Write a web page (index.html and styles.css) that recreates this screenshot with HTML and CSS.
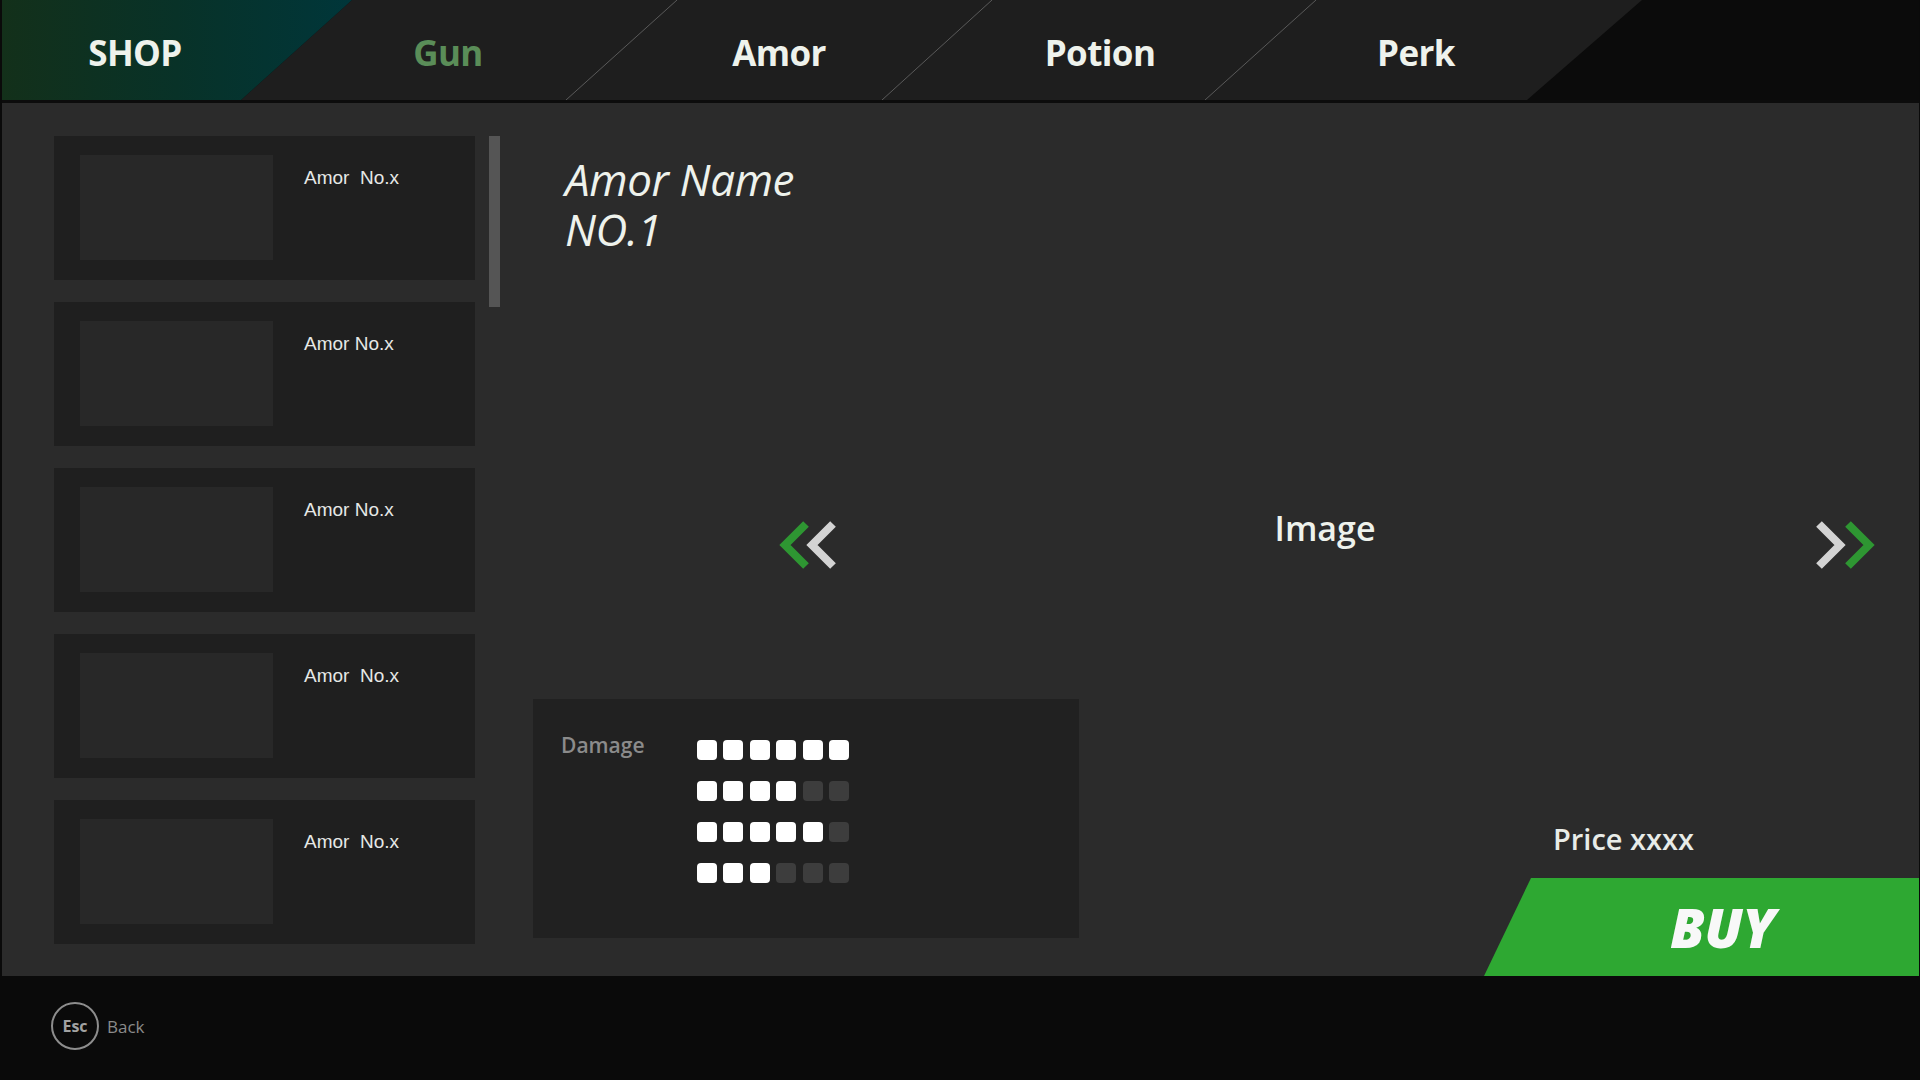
FILE: index.html
```html
<!DOCTYPE html>
<html lang="en">
<head>
<meta charset="utf-8">
<title>Shop</title>
<link rel="stylesheet" href="styles.css">
</head>
<body>
<div class="screen">
  <header class="topbar">
    <svg class="topbar-bg" width="1917" height="100" viewBox="0 0 1917 100" aria-hidden="true">
      <defs>
        <linearGradient id="shopGrad" x1="0" y1="0" x2="350" y2="0" gradientUnits="userSpaceOnUse">
          <stop offset="0" stop-color="#13301a"/>
          <stop offset="0.5" stop-color="#083228"/>
          <stop offset="1" stop-color="#00363a"/>
        </linearGradient>
      </defs>
      <polygon points="350,0 1640,0 1525,100 239,100" fill="#1e1e1e"/>
      <polygon points="0,0 350,0 239,100 0,100" fill="url(#shopGrad)"/>
      <line x1="675" y1="0" x2="564" y2="100" stroke="#5a5a5a" stroke-width="1"/>
      <line x1="990" y1="0" x2="880" y2="100" stroke="#5a5a5a" stroke-width="1"/>
      <line x1="1314" y1="0" x2="1203" y2="100" stroke="#5a5a5a" stroke-width="1"/>
    </svg>
    <nav class="tabs">
      <div class="tab tab-shop">SHOP</div>
      <div class="tab tab-active">Gun</div>
      <div class="tab">Amor</div>
      <div class="tab">Potion</div>
      <div class="tab">Perk</div>
    </nav>
  </header>

  <main class="main">
    <aside class="list-col">
      <div class="list">
        <div class="card"><div class="thumb"></div><div class="card-name">Amor  No.x</div></div>
        <div class="card"><div class="thumb"></div><div class="card-name">Amor No.x</div></div>
        <div class="card"><div class="thumb"></div><div class="card-name">Amor No.x</div></div>
        <div class="card"><div class="thumb"></div><div class="card-name">Amor  No.x</div></div>
        <div class="card"><div class="thumb"></div><div class="card-name">Amor  No.x</div></div>
      </div>
      <div class="scrollbar"><div class="scroll-thumb"></div></div>
    </aside>

    <section class="detail">
      <h1 class="title"><span class="title-line">Amor Name</span><span class="title-line">NO.1</span></h1>

      <div class="viewer">
        <svg class="chev chev-left" width="60" height="50" viewBox="0 0 60 50" aria-hidden="true">
          <polyline points="27,4 6,25 27,46" fill="none" stroke="#2e9632" stroke-width="8"/>
          <polyline points="54,4 33,25 54,46" fill="none" stroke="#d3d3d3" stroke-width="8"/>
        </svg>
        <div class="image-label">Image</div>
        <svg class="chev chev-right" width="62" height="50" viewBox="0 0 62 50" aria-hidden="true">
          <polyline points="6,4 27,25 6,46" fill="none" stroke="#d3d3d3" stroke-width="8"/>
          <polyline points="35,4 56,25 35,46" fill="none" stroke="#2e9632" stroke-width="8"/>
        </svg>
      </div>

      <div class="bottom">
        <div class="stats">
          <div class="stats-label">Damage</div>
          <div class="bars">
            <div class="bar-row"><span class="pip on"></span><span class="pip on"></span><span class="pip on"></span><span class="pip on"></span><span class="pip on"></span><span class="pip on"></span></div>
            <div class="bar-row"><span class="pip on"></span><span class="pip on"></span><span class="pip on"></span><span class="pip on"></span><span class="pip"></span><span class="pip"></span></div>
            <div class="bar-row"><span class="pip on"></span><span class="pip on"></span><span class="pip on"></span><span class="pip on"></span><span class="pip on"></span><span class="pip"></span></div>
            <div class="bar-row"><span class="pip on"></span><span class="pip on"></span><span class="pip on"></span><span class="pip"></span><span class="pip"></span><span class="pip"></span></div>
          </div>
        </div>
        <div class="purchase">
          <div class="price">Price xxxx</div>
          <div class="buy"><span class="buy-text">BUY</span></div>
        </div>
      </div>
    </section>
  </main>

  <footer class="footer">
    <div class="key">Esc</div>
    <div class="key-label">Back</div>
  </footer>
</div>
</body>
</html>
```

FILE: styles.css
```css
* { box-sizing: border-box; }

html, body {
  margin: 0;
  padding: 0;
  background: #0a0a0a;
}

body {
  font-family: "Open Sans", "Liberation Sans", sans-serif;
  color: #eef2ec;
}

.screen {
  width: 1920px;
  height: 1080px;
  border-left: 2px solid #0a0a0a;
  border-right: 1px solid #0a0a0a;
  background: #0a0a0a;
  display: flex;
  flex-direction: column;
  overflow: hidden;
}

/* ---------- top bar ---------- */
.topbar {
  position: relative;
  height: 103px;
  flex: none;
  background: #0b0b0b;
  border-bottom: 3px solid #0c0c0c;
}

.topbar-bg {
  position: absolute;
  left: 0;
  top: 0;
  display: block;
}

.tabs {
  position: relative;
  display: grid;
  grid-template-columns: 266px 360px 302px 340px 292px;
  padding-top: 33px;
}

.tab {
  text-align: center;
  font-size: 35px;
  font-weight: 700;
  line-height: 40px;
  color: #eef2ec;
  letter-spacing: -0.6px;
}

.tab-active {
  color: #5a8d58;
}

/* ---------- main ---------- */
.main {
  flex: 1;
  display: flex;
  background: #2b2b2b;
  min-height: 0;
}

.list-col {
  display: flex;
  padding-left: 52px;
  padding-top: 33px;
  flex: none;
}

.list {
  width: 421px;
  display: flex;
  flex-direction: column;
  gap: 22px;
}

.card {
  height: 144px;
  background: #1f1f1f;
  display: flex;
  align-items: flex-start;
  padding: 19px 0 0 26px;
}

.thumb {
  width: 193px;
  height: 105px;
  background: #282828;
  flex: none;
}

.card-name {
  margin-left: 31px;
  margin-top: 12px;
  font-family: "Liberation Sans", Arial, sans-serif;
  font-size: 19px;
  line-height: 22px;
  white-space: pre;
  color: #e6e8e6;
}

.scrollbar {
  margin-left: 14px;
  width: 11px;
}

.scroll-thumb {
  width: 11px;
  height: 171px;
  background: #555555;
}

/* ---------- detail ---------- */
.detail {
  flex: 1;
  display: flex;
  flex-direction: column;
  min-width: 0;
}

.title {
  margin: 51px 0 0 0;
  padding-left: 65px;
  font-size: 44px;
  font-weight: 400;
  font-style: italic;
  line-height: 50px;
  color: #eef2ec;
  letter-spacing: -0.4px;
}

.title-line {
  display: block;
  height: 50px;
}

.viewer {
  margin-top: 250px;
  height: 66px;
  display: flex;
  align-items: flex-start;
}

.chev {
  display: block;
  flex: none;
  margin-top: 16px;
}

.chev-left {
  margin-left: 279px;
}

.image-label {
  width: 200px;
  margin-left: 386px;
  margin-top: 4px;
  text-align: center;
  font-size: 34px;
  font-weight: 600;
  line-height: 40px;
  color: #eef2ec;
}

.chev-right {
  margin-left: auto;
  margin-right: 44px;
}

.bottom {
  margin-top: auto;
  display: flex;
  align-items: flex-end;
}

.stats {
  margin-left: 33px;
  margin-bottom: 38px;
  width: 546px;
  height: 239px;
  background: #212121;
  display: flex;
  padding: 33px 0 0 28px;
}

.stats-label {
  width: 136px;
  font-size: 21px;
  font-weight: 600;
  line-height: 26px;
  color: #8b8b8b;
}

.bars {
  margin-top: 8px;
  display: flex;
  flex-direction: column;
  gap: 21px;
}

.bar-row {
  display: flex;
  gap: 6.4px;
}

.pip {
  width: 20px;
  height: 20px;
  border-radius: 4px;
  background: #3d3d3d;
}

.pip.on {
  background: #ffffff;
}

.purchase {
  margin-left: auto;
  width: 435px;
  display: flex;
  flex-direction: column;
}

.price {
  padding-left: 69px;
  font-size: 29px;
  font-weight: 600;
  line-height: 36px;
  margin-bottom: 21px;
  color: #e8ece8;
}

.buy {
  height: 98px;
  background: #2ea832;
  clip-path: polygon(47px 0, 100% 0, 100% 100%, 0 100%);
  display: flex;
  align-items: center;
  justify-content: center;
  padding-left: 42px;
}

.buy-text {
  font-size: 55px;
  font-weight: 800;
  font-style: italic;
  line-height: 60px;
  color: #f8f8f8;
  letter-spacing: -0.5px;
}

/* ---------- footer ---------- */
.footer {
  height: 104px;
  flex: none;
  background: #0a0a0a;
  display: flex;
  align-items: center;
  padding-left: 49px;
  padding-bottom: 4px;
}

.key {
  width: 48px;
  height: 48px;
  border: 2.5px solid #8d8d8d;
  border-radius: 50%;
  display: flex;
  align-items: center;
  justify-content: center;
  font-size: 16px;
  font-weight: 700;
  color: #a2a2a2;
}

.key-label {
  margin-left: 8px;
  font-size: 17px;
  font-weight: 400;
  color: #8a8a8a;
}
```
